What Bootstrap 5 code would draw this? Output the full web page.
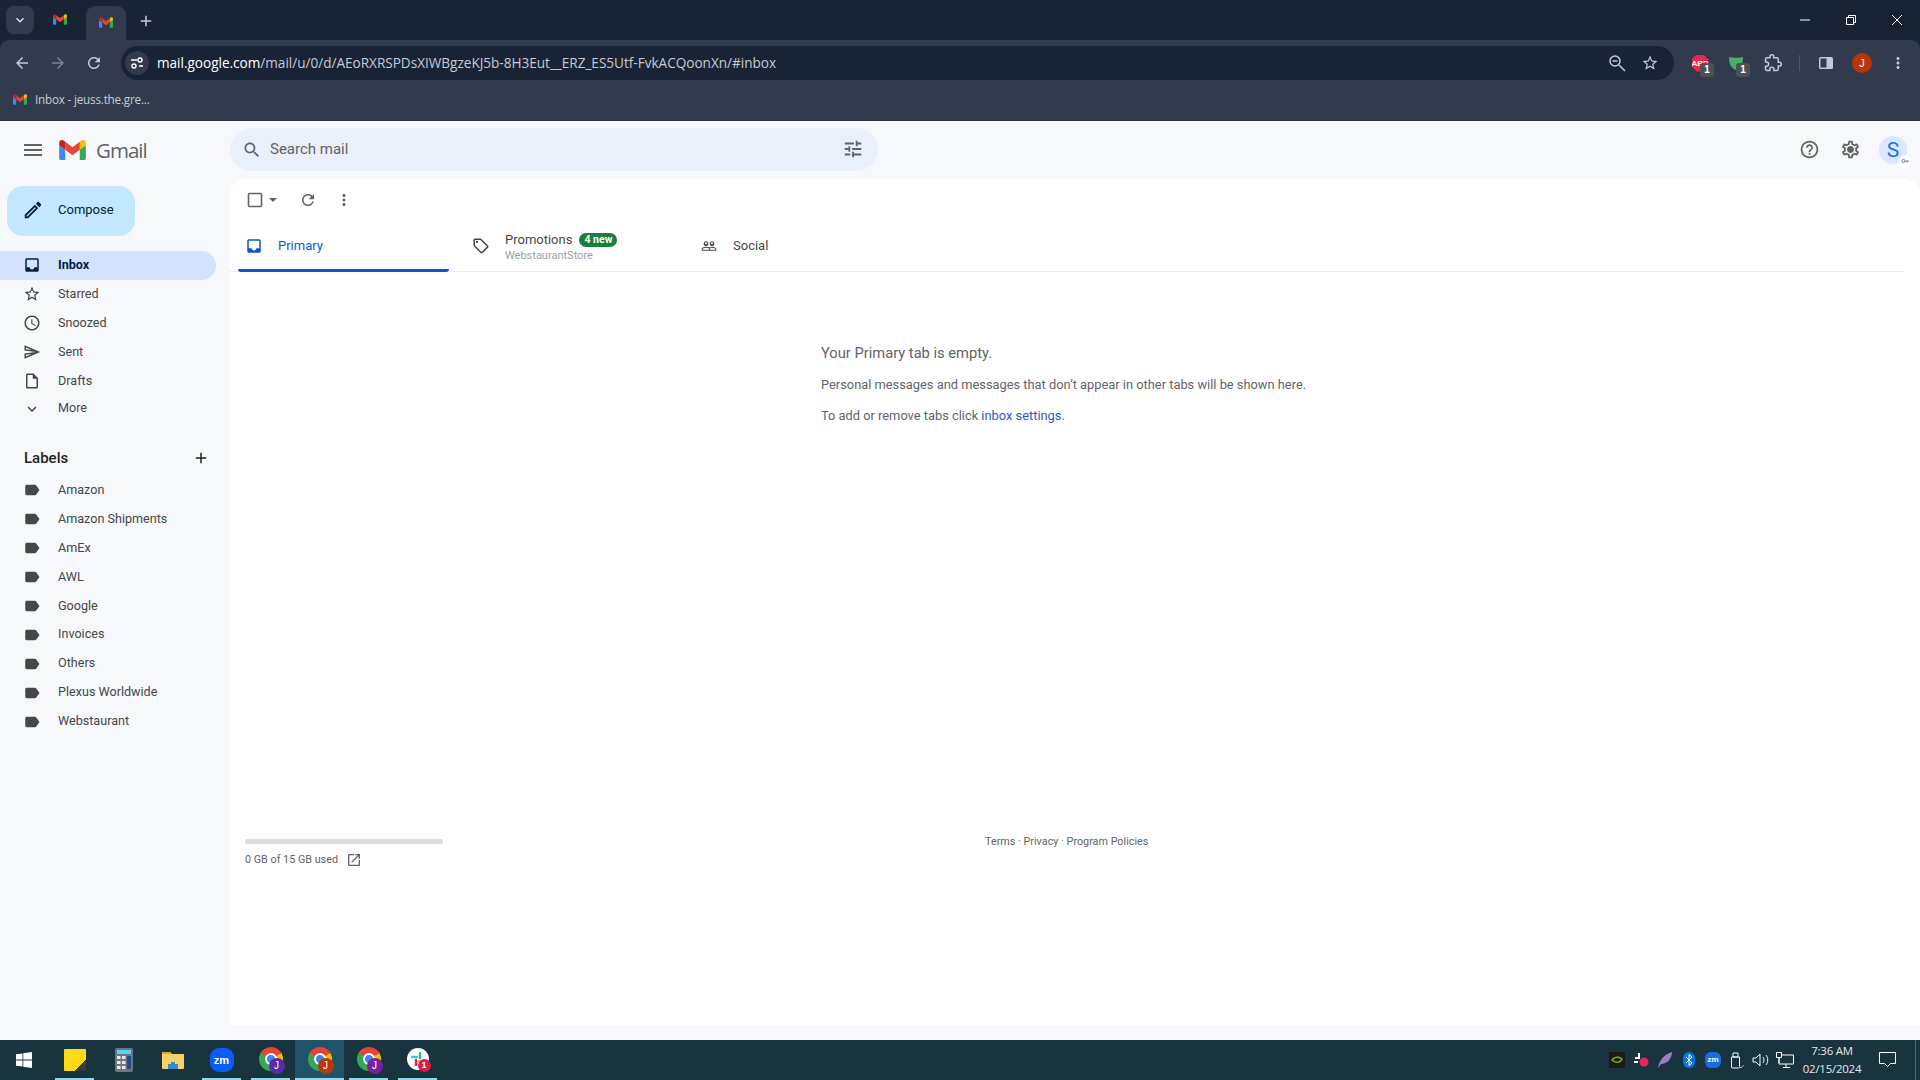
<!DOCTYPE html>
<html lang="en">
<head>
    <meta charset="utf-8" />
    <meta name="viewport" content="width=device-width, initial-scale=1">
    <title>Inbox - Gmail</title>
    <link href="https://cdn.jsdelivr.net/npm/bootstrap@5.3.0/dist/css/bootstrap.min.css" rel="stylesheet">
    <style>
        html, body { height: 1080px; overflow: hidden; }
        body { font-family: Roboto, "Liberation Sans", sans-serif; font-size: 12.6px; color: #444746; background: #f6f8fc; }
        svg { display: block; flex: none; fill: currentColor; }

        /* browser frame */
        .browser-top { background: #192336; }
        .tab-strip { height: 40px; color: #fff; }
        .tab-list-btn { width: 28px; height: 28px; margin: 6px 0 0 6px; background: #323b4d; border-radius: 8px; color: #e3e6ea; }
        .tab-idle { width: 52px; padding-bottom: 1px; }
        .tab-active { width: 40px; height: 34px; margin-top: 6px; padding-bottom: 2px; background: #323b4d; border-radius: 9px 9px 0 0; }
        .tab-new { width: 40px; color: #c8ccd4; padding-top: 1px; }
        .win-btn { width: 46px; color: #fff; }
        .tool-bar { height: 40px; background: #323b4d; border-radius: 9px 9px 0 0; padding: 6px 0 0 4px; color: #c7cbd3; }
        .tool-btn { width: 36px; height: 34px; }
        .url-box { width: 1553px; height: 34px; margin: 0 8px 0 9px; background: #192336; border-radius: 17px; color: #fff; }
        .url-site { width: 24px; height: 24px; margin: 0 8px 0 4px; background: #323b4d; border-radius: 50%; }
        .url-text { font-family: "Open Sans", "Liberation Sans", sans-serif; font-size: 13.6px; letter-spacing: -.02px; color: #c7cbd3; }
        .url-text b { font-weight: 400; color: #fff; }
        .url-actions { gap: 15px; margin-right: 15px; }
        .ext-icon { position: relative; width: 36px; height: 34px; }
        .ext-count { position: absolute; right: 4px; bottom: 3px; width: 14px; height: 14px; background: #505050; border-radius: 3px; font: 700 10px/14px "Liberation Sans", sans-serif; color: #fff; text-align: center; }
        .ext-abp { width: 17px; height: 17px; background: #e8264f; clip-path: polygon(30% 0, 70% 0, 100% 30%, 100% 70%, 70% 100%, 30% 100%, 0 70%, 0 30%); font: 700 8px/17px "Liberation Sans", sans-serif; color: #fff; text-align: center; }
        .ext-puzzle { width: 38px; }
        .tool-sep-wrap { height: 34px; }
        .tool-sep { width: 1px; height: 16px; margin: 0 8px 0 7px; background: #4e5768; }
        .chrome-avatar { width: 20px; height: 20px; background: #bb3606; border-radius: 50%; font: 11px/20px "Liberation Sans", sans-serif; color: #fff; text-align: center; }
        .bookmark-bar { height: 41px; background: #323b4d; border-bottom: 1px solid #2a2f38; padding: 0 0 1px 13px; font-family: "Open Sans", "Liberation Sans", sans-serif; font-size: 11.7px; letter-spacing: -.2px; color: #c7cbd3; }

        /* gmail header */
        .gm-head { height: 58px; }
        .gm-brand { width: 230px; padding-left: 21px; color: #5f6368; }
        .gm-logo { margin-left: 14px; }
        .gm-word { font-family: "Open Sans", sans-serif; font-size: 20.5px; letter-spacing: -1px; color: #5f6368; margin-left: 10px; }
        .gm-search { width: 648px; height: 43px; margin-top: -1px; background: #e9f0fa; border-radius: 22px; padding: 0 12px; font-size: 15px; color: #5f6368; }
        .gm-tune { margin: -1px 2px 0 0; }
        .head-btn { width: 40px; margin-top: -1px; color: #5f6368; }
        .help-btn { margin-left: -1px; margin-right: 1px; }
        .gm-avatar { position: relative; width: 28px; height: 28px; margin: 0 13px 0 9px; background: #dbe8fb; border-radius: 50%; font-size: 21px; line-height: 28px; color: #1a73e8; text-align: center; }
        .gm-key { position: absolute; right: -4px; bottom: -3px; width: 12px; height: 12px; background: #fff; border-radius: 50%; color: #5f6368; padding: 2px; }

        /* sidebar */
        .gm-side { width: 230px; padding-top: 7px; }
        .gm-compose { width: 128px; height: 50px; margin: 0 0 15px 7px; background: #c2e7ff; border-radius: 16px; padding: 0 0 2px 15px; font-size: 13px; color: #001d35; border: 0; gap: 14px; }
        .side-row { height: 29px; width: 216px; padding: 0 0 1px 23px; color: #444746; border-radius: 0 15px 15px 0; }
        .side-row svg { margin-right: 17px; }
        .side-row.current { background: #d3e3fd; color: #041e49; font-weight: 700; }
        .side-row.more-row { height: 25px; padding-bottom: 0; }
        .label-title { height: 30px; margin-top: 22px; padding: 0 20px 0 24px; font-size: 15px; font-weight: 500; color: #1f1f1f; }
        .label-list { margin-top: 3px; }
        .label-list .side-row { height: 28.9px; padding-bottom: 0; }

        /* main panel */
        .gm-panel { background: #fff; border-radius: 16px 16px 0 0; margin-bottom: 15px; padding-right: 15px; }
        .mail-tools { height: 42px; padding: 0 0 0 16px; color: #5f6368; }
        .mail-refresh { margin-left: 21px; }
        .mail-more { margin-left: 18px; }
        .mail-tabs { height: 48px; margin: 3px 0 0; border-bottom: 1px solid #eceef1; font-size: 13px; }
        .mail-tab { width: 211px; height: 48px; border-bottom: 3px solid transparent; border-radius: 0 0 3px 3px; padding: 0 0 1px 23px; color: #444746; gap: 15px; }
        .mail-tab.on { margin-left: 8px; padding-left: 7px; border-bottom-color: #0b57d0; color: #0b57d0; }
        .mail-tab.social-tab { padding-left: 41px; gap: 16px; }
        .tab-promo { margin-top: 1px; }
        .tab-sub { font-size: 11px; color: #9aa0a6; line-height: 14px; margin-top: 0; }
        .new-pill { height: 14px; margin-left: 7px; padding: 0 5px; background: #188038; border-radius: 7px; font-size: 10.5px; font-weight: 700; line-height: 14px; color: #fff; }
        .empty-box { padding: 71px 0 0 591px; line-height: 20px; color: #5f6368; font-size: 12.85px; }
        .empty-title { font-size: 14.7px; margin-bottom: 12px; }
        .empty-box p { margin: 0 0 11px; }
        .empty-box a { color: #2f55c8; text-decoration: none; }
        .mail-foot { padding: 0 0 157px 15px; font-size: 10.8px; color: #5f6368; }
        .quota { width: 198px; }
        .quota-bar { height: 5px; background: #dadce0; border-radius: 3px; margin-bottom: 8px; }
        .foot-links { margin-left: 542px; line-height: 5px; }

        /* windows taskbar */
        .task-bar { height: 40px; background: #17343f; color: #fff; }
        .task-tile { position: relative; width: 49px; height: 40px; }
        .task-tile.start-tile { width: 50px; padding-right: 2px; }
        .task-tile.running::after { content: ""; position: absolute; left: 5px; right: 5px; bottom: 0; height: 2px; background: #8fd8ee; }
        .task-tile.focus { background: #1f5468; }
        .task-tile.focus::after { left: 0; right: 0; }
        .tile-sticky { width: 22px; height: 22px; background: linear-gradient(135deg, #ffd91a 75%, #3a3a3a 75%); border-radius: 1px; }
        .tile-calc { width: 18px; height: 24px; background: #6d7680; border-radius: 2px; padding: 2px; }
        .tile-zoom { width: 24px; height: 24px; background: #0b5cff; border-radius: 9px; font: 700 11px/24px "Liberation Sans", sans-serif; color: #fff; text-align: center; }
        .tile-chrome { position: relative; width: 24px; height: 24px; margin-top: -2px; border-radius: 50%; background: conic-gradient(from 60deg, #fbbc04 0 120deg, #34a853 120deg 240deg, #ea4335 240deg 360deg); }
        .tile-chrome::before { content: ""; position: absolute; inset: 6px; background: #4285f4; border: 2px solid #fff; border-radius: 50%; }
        .tile-user { position: absolute; right: -2px; bottom: -3px; width: 16px; height: 16px; border-radius: 50%; font: 10px/16px "Liberation Sans", sans-serif; color: #fff; text-align: center; }
        .user-violet { background: #5b2aa8; }
        .user-rust { background: #bb3606; }
        .user-purple { background: #7b1fa2; }
        .tile-slack { position: relative; width: 22px; height: 22px; margin-top: -2px; background: #fff; border-radius: 50%; }
        .tile-badge { position: absolute; right: -2px; bottom: -2px; width: 13px; height: 13px; background: #d81b4a; border-radius: 50%; font: 700 9px/13px "Liberation Sans", sans-serif; text-align: center; color: #fff; }
        .tray-item { width: 24px; }
        .tray-nvidia { width: 16px; height: 16px; background: #1a1a1a; color: #76b900; }
        .tray-blue { width: 12px; height: 16px; background: #0a74e0; border-radius: 6px; }
        .tray-zoom { width: 16px; height: 16px; background: #1a6de0; border-radius: 6px; font: 700 8px/16px "Liberation Sans", sans-serif; text-align: center; color: #fff; }
        .tray-clock { width: 70px; font-family: "Open Sans", "Liberation Sans", sans-serif; font-size: 11.4px; line-height: 18px; letter-spacing: -.2px; text-align: center; color: #e6eaec; }
        .tray-note { width: 40px; }
        .tray-line { width: 1px; height: 40px; margin: 0 4px 0 8px; background: #54666e; }
    </style>
</head>
<body class="d-flex flex-column m-0">
    <svg width="0" height="0" class="position-absolute">
        <symbol id="i-gmail" viewBox="52 42 88 66">
            <path fill="#4285f4" d="M58 108h14V74L52 59v43c0 3.32 2.69 6 6 6"/>
            <path fill="#34a853" d="M120 108h14c3.32 0 6-2.69 6-6V59l-20 15"/>
            <path fill="#fbbc04" d="M120 48v26l20-15v-8c0-7.42-8.47-11.65-14.4-7.2"/>
            <path fill="#ea4335" d="M72 74V48l24 18 24-18v26L96 92"/>
            <path fill="#c5221f" d="M52 51v8l20 15V48l-5.6-4.2c-5.94-4.45-14.4-.22-14.4 7.2"/>
        </symbol>
        <symbol id="i-menu" viewBox="0 0 24 24"><path d="M3 18h18v-2H3v2zm0-5h18v-2H3v2zm0-7v2h18V6H3z"/></symbol>
        <symbol id="i-search" viewBox="0 0 24 24"><path d="M15.5 14h-.79l-.28-.27C15.41 12.59 16 11.11 16 9.5 16 5.91 13.09 3 9.5 3S3 5.91 3 9.5 5.91 16 9.5 16c1.61 0 3.09-.59 4.23-1.57l.27.28v.79l5 4.99L20.49 19l-4.99-5zm-6 0C7.01 14 5 11.99 5 9.5S7.01 5 9.5 5 14 7.01 14 9.5 11.99 14 9.5 14z"/></symbol>
        <symbol id="i-tune" viewBox="0 0 24 24"><path d="M3 17v2h6v-2H3zM3 5v2h10V5H3zm10 16v-2h8v-2h-8v-2h-2v6h2zM7 9v2H3v2h4v2h2V9H7zm14 4v-2H11v2h10zm-6-4h2V7h4V5h-4V3h-2v6z"/></symbol>
        <symbol id="i-help" viewBox="0 0 24 24"><path d="M11 18h2v-2h-2v2zm1-16C6.48 2 2 6.48 2 12s4.48 10 10 10 10-4.48 10-10S17.52 2 12 2zm0 18c-4.41 0-8-3.59-8-8s3.59-8 8-8 8 3.59 8 8-3.59 8-8 8zm0-14c-2.21 0-4 1.79-4 4h2c0-1.1.9-2 2-2s2 .9 2 2c0 2-3 1.75-3 5h2c0-2.25 3-2.5 3-5 0-2.21-1.79-4-4-4z"/></symbol>
        <symbol id="i-gear" viewBox="0 0 24 24"><path d="M19.43 12.98c.04-.32.07-.64.07-.98 0-.34-.03-.66-.07-.98l2.11-1.65c.19-.15.24-.42.12-.64l-2-3.46c-.09-.16-.26-.25-.44-.25-.06 0-.12.01-.17.03l-2.49 1c-.52-.4-1.08-.73-1.69-.98l-.38-2.65C14.46 2.18 14.25 2 14 2h-4c-.25 0-.46.18-.49.42l-.38 2.65c-.61.25-1.17.59-1.69.98l-2.49-1c-.06-.02-.12-.03-.18-.03-.17 0-.34.09-.43.25l-2 3.46c-.13.22-.07.49.12.64l2.11 1.65c-.04.32-.07.65-.07.98 0 .33.03.66.07.98l-2.11 1.65c-.19.15-.24.42-.12.64l2 3.46c.09.16.26.25.44.25.06 0 .12-.01.17-.03l2.49-1c.52.4 1.08.73 1.69.98l.38 2.65c.03.24.24.42.49.42h4c.25 0 .46-.18.49-.42l.38-2.65c.61-.25 1.17-.59 1.69-.98l2.49 1c.06.02.12.03.18.03.17 0 .34-.09.43-.25l2-3.46c.12-.22.07-.49-.12-.64l-2.11-1.65zm-1.98-1.71c.04.31.05.52.05.73 0 .21-.02.43-.05.73l-.14 1.13.89.7 1.08.84-.7 1.21-1.27-.51-1.04-.42-.9.68c-.43.32-.84.56-1.25.73l-1.06.43-.16 1.13-.2 1.35h-1.4l-.19-1.35-.16-1.13-1.06-.43c-.43-.18-.83-.41-1.23-.71l-.91-.7-1.06.43-1.27.51-.7-1.21 1.08-.84.89-.7-.14-1.13c-.03-.31-.05-.54-.05-.74s.02-.43.05-.73l.14-1.13-.89-.7-1.08-.84.7-1.21 1.27.51 1.04.42.9-.68c.43-.32.84-.56 1.25-.73l1.06-.43.16-1.13.2-1.35h1.39l.19 1.35.16 1.13 1.06.43c.43.18.83.41 1.23.71l.91.7 1.06-.43 1.27-.51.7 1.21-1.07.85-.89.7.14 1.13zM12 8c-2.21 0-4 1.79-4 4s1.79 4 4 4 4-1.79 4-4-1.79-4-4-4z"/></symbol>
        <symbol id="i-edit" viewBox="0 0 24 24"><path d="M14.06 9.02l.92.92L5.92 19H5v-.92l9.06-9.06M17.66 3c-.25 0-.51.1-.7.29l-1.83 1.83 3.75 3.75 1.83-1.83c.39-.39.39-1.02 0-1.41l-2.34-2.34c-.2-.2-.45-.29-.71-.29zm-3.6 3.19L3 17.25V21h3.75L17.81 9.94l-3.75-3.75z"/></symbol>
        <symbol id="i-inbox" viewBox="0 0 24 24"><path d="M19 3H5c-1.1 0-2 .9-2 2v14c0 1.1.9 2 2 2h14c1.1 0 2-.9 2-2V5c0-1.1-.9-2-2-2zm0 12h-4c0 1.66-1.35 3-3 3s-3-1.34-3-3H5V5h14v10z"/></symbol>
        <symbol id="i-star" viewBox="0 0 24 24"><path d="M22 9.24l-7.19-.62L12 2 9.19 8.63 2 9.24l5.46 4.73L5.82 21 12 17.27 18.18 21l-1.63-7.03L22 9.24zM12 15.4l-3.76 2.27 1-4.28-3.32-2.88 4.38-.38L12 6.1l1.71 4.04 4.38.38-3.32 2.88 1 4.28L12 15.4z"/></symbol>
        <symbol id="i-clock" viewBox="0 0 24 24"><path d="M11.99 2C6.47 2 2 6.48 2 12s4.47 10 9.99 10C17.52 22 22 17.52 22 12S17.52 2 11.99 2zM12 20c-4.42 0-8-3.58-8-8s3.58-8 8-8 8 3.58 8 8-3.58 8-8 8zm.5-13H11v6l5.25 3.15.75-1.23-4.5-2.67z"/></symbol>
        <symbol id="i-send" viewBox="0 0 24 24"><path d="M4.01 6.03l7.51 3.22-7.52-1 .01-2.22m7.5 8.72L4 17.97v-2.22l7.51-1M2.01 3L2 10l15 2-15 2 .01 7L23 12 2.01 3z"/></symbol>
        <symbol id="i-draft" viewBox="0 0 24 24"><path d="M14 2H6c-1.1 0-2 .9-2 2v16c0 1.1.9 2 2 2h12c1.1 0 2-.9 2-2V8l-6-6zM6 20V4h7v5h5v11H6z"/></symbol>
        <symbol id="i-down" viewBox="0 0 24 24"><path d="M16.59 8.59L12 13.17 7.41 8.59 6 10l6 6 6-6z"/></symbol>
        <symbol id="i-add" viewBox="0 0 24 24"><path d="M19 13h-6v6h-2v-6H5v-2h6V5h2v6h6v2z"/></symbol>
        <symbol id="i-label" viewBox="0 0 24 24"><path d="M17.63 5.84C17.27 5.33 16.67 5 16 5L5 5.01C3.9 5.01 3 5.9 3 7v10c0 1.1.9 1.99 2 1.99L16 19c.67 0 1.27-.33 1.63-.84L22 12l-4.37-6.16z"/></symbol>
        <symbol id="i-refresh" viewBox="0 0 24 24"><path d="M17.65 6.35C16.2 4.9 14.21 4 12 4c-4.42 0-7.99 3.58-7.99 8s3.57 8 7.99 8c3.73 0 6.84-2.55 7.73-6h-2.08c-.82 2.33-3.04 4-5.65 4-3.31 0-6-2.69-6-6s2.69-6 6-6c1.66 0 3.14.69 4.22 1.78L13 11h7V4l-2.35 2.35z"/></symbol>
        <symbol id="i-dots" viewBox="0 0 24 24"><path d="M12 8c1.1 0 2-.9 2-2s-.9-2-2-2-2 .9-2 2 .9 2 2 2zm0 2c-1.1 0-2 .9-2 2s.9 2 2 2 2-.9 2-2-.9-2-2-2zm0 6c-1.1 0-2 .9-2 2s.9 2 2 2 2-.9 2-2-.9-2-2-2z"/></symbol>
        <symbol id="i-tag" viewBox="0 0 24 24"><path d="M21.41 11.41l-8.83-8.83C12.21 2.21 11.7 2 11.17 2H4c-1.1 0-2 .9-2 2v7.17c0 .53.21 1.04.59 1.41l8.83 8.83c.78.78 2.05.78 2.83 0l7.17-7.17c.78-.78.78-2.05-.01-2.83zM12.83 20L4 11.17V4h7.17L20 12.83 12.83 20z"/><circle cx="6.5" cy="6.5" r="1.5"/></symbol>
        <symbol id="i-people" viewBox="0 0 24 24"><path d="M16.5 13c-1.2 0-3.07.34-4.5 1-1.43-.67-3.3-1-4.5-1C5.33 13 1 14.08 1 16.25V19h22v-2.75c0-2.17-4.33-3.25-6.5-3.25zm-4 4.5h-10v-1.25c0-.54 2.56-1.75 5-1.75s5 1.21 5 1.75v1.25zm9 0H14v-1.25c0-.46-.2-.86-.52-1.22.88-.3 1.96-.53 3.02-.53 2.44 0 5 1.21 5 1.75v1.25zM7.5 12c1.93 0 3.5-1.57 3.5-3.5S9.43 5 7.5 5 4 6.57 4 8.5 5.57 12 7.5 12zm0-5.5c.83 0 1.5.67 1.5 1.5s-.67 1.5-1.5 1.5S6 8.83 6 8s.67-1.5 1.5-1.5zm9 5.5c1.93 0 3.5-1.57 3.5-3.5S18.43 5 16.5 5 13 6.57 13 8.5s1.57 3.5 3.5 3.5zm0-5.5c.83 0 1.5.67 1.5 1.5s-.67 1.5-1.5 1.5S15 8.83 15 8s.67-1.5 1.5-1.5z"/></symbol>
        <symbol id="i-open" viewBox="0 0 24 24"><path d="M19 19H5V5h7V3H5a2 2 0 0 0-2 2v14a2 2 0 0 0 2 2h14c1.1 0 2-.9 2-2v-7h-2v7zM14 3v2h3.59l-9.83 9.83 1.41 1.41L19 6.41V10h2V3h-7z"/></symbol>
        <symbol id="i-back" viewBox="0 0 24 24"><path d="M20 11H7.83l5.59-5.59L12 4l-8 8 8 8 1.41-1.41L7.83 13H20v-2z"/></symbol>
        <symbol id="i-forward" viewBox="0 0 24 24"><path d="M12 4l-1.41 1.41L16.17 11H4v2h12.17l-5.58 5.59L12 20l8-8z"/></symbol>
    </svg>

    <!-- browser frame -->
    <div class="browser-top">
        <div class="tab-strip d-flex">
            <div class="tab-list-btn d-flex align-items-center justify-content-center">
                <svg width="16" height="16"><use href="#i-down"/></svg>
            </div>
            <div class="tab-idle d-flex align-items-center justify-content-center"><svg width="14" height="11"><use href="#i-gmail"/></svg></div>
            <div class="tab-active d-flex align-items-center justify-content-center"><svg width="14" height="11"><use href="#i-gmail"/></svg></div>
            <div class="tab-new d-flex align-items-center justify-content-center"><svg width="18" height="18"><use href="#i-add"/></svg></div>
            <div class="ms-auto d-flex">
                <div class="win-btn d-flex align-items-center justify-content-center">
                    <svg width="10" height="10" viewBox="0 0 10 10"><path d="M0 5h10" stroke="#fff" fill="none"/></svg>
                </div>
                <div class="win-btn d-flex align-items-center justify-content-center">
                    <svg width="10" height="10" viewBox="0 0 10 10"><path d="M.5 2.5h7v7h-7zM2.5 2.5v-2h7v7h-2" stroke="#fff" fill="none"/></svg>
                </div>
                <div class="win-btn d-flex align-items-center justify-content-center">
                    <svg width="10" height="10" viewBox="0 0 10 10"><path d="M0 0l10 10M10 0L0 10" stroke="#fff" fill="none"/></svg>
                </div>
            </div>
        </div>
        <div class="tool-bar d-flex align-items-start">
            <div class="tool-btn d-flex align-items-center justify-content-center"><svg width="18" height="18"><use href="#i-back"/></svg></div>
            <div class="tool-btn d-flex align-items-center justify-content-center opacity-50"><svg width="18" height="18"><use href="#i-forward"/></svg></div>
            <div class="tool-btn d-flex align-items-center justify-content-center"><svg width="18" height="18"><use href="#i-refresh"/></svg></div>
            <div class="url-box d-flex align-items-center">
                <div class="url-site d-flex align-items-center justify-content-center">
                    <svg width="14" height="14" viewBox="0 0 14 14"><path d="M1 4h6M9 10h4" stroke="#fff" stroke-width="1.4"/><circle cx="10" cy="4" r="2" fill="none" stroke="#fff" stroke-width="1.4"/><circle cx="4" cy="10" r="2" fill="none" stroke="#fff" stroke-width="1.4"/></svg>
                </div>
                <div class="url-text text-nowrap"><b>mail.google.com</b>/mail/u/0/d/AEoRXRSPDsXIWBgzeKJ5b-8H3Eut__ERZ_ES5Utf-FvkACQoonXn/#inbox</div>
                <div class="url-actions ms-auto d-flex align-items-center">
                    <svg width="18" height="18" viewBox="0 0 18 18"><circle cx="7" cy="7" r="5" fill="none" stroke="#c7cbd3" stroke-width="1.5"/><path d="M4.5 7h5M11 11l6 6" stroke="#c7cbd3" stroke-width="1.5"/></svg>
                    <svg width="18" height="18" viewBox="0 0 24 24"><path fill="#c7cbd3" d="M22 9.24l-7.19-.62L12 2 9.19 8.63 2 9.24l5.46 4.73L5.82 21 12 17.27 18.18 21l-1.63-7.03L22 9.24zM12 15.4l-3.76 2.27 1-4.28-3.32-2.88 4.38-.38L12 6.1l1.71 4.04 4.38.38-3.32 2.88 1 4.28L12 15.4z"/></svg>
                </div>
            </div>
            <div class="ext-icon d-flex align-items-center justify-content-center">
                <div class="ext-abp">ABP</div><span class="ext-count">1</span>
            </div>
            <div class="ext-icon d-flex align-items-center justify-content-center">
                <svg width="16" height="16" viewBox="0 0 16 16"><path d="M1 2c4 1 10 1 14 0 0 7-2 11-7 13C3 13 1 9 1 2z" fill="#4caf68"/></svg><span class="ext-count">1</span>
            </div>
            <div class="tool-btn ext-puzzle d-flex align-items-center justify-content-center">
                <svg width="18" height="18" viewBox="0 0 24 24"><path d="M20.5 11H19V7c0-1.1-.9-2-2-2h-4V3.5C13 2.12 11.88 1 10.5 1S8 2.12 8 3.5V5H4c-1.1 0-1.99.9-1.99 2v3.8H3.5c1.49 0 2.7 1.21 2.7 2.7s-1.21 2.7-2.7 2.7H2V20c0 1.1.9 2 2 2h3.8v-1.5c0-1.49 1.21-2.7 2.7-2.7 1.49 0 2.7 1.21 2.7 2.7V22H17c1.1 0 2-.9 2-2v-4h1.5c1.38 0 2.5-1.12 2.5-2.5S21.88 11 20.5 11z" fill="none" stroke="#c0c8e0" stroke-width="2"/></svg>
            </div>
            <div class="tool-sep-wrap d-flex align-items-center"><div class="tool-sep"></div></div>
            <div class="tool-btn d-flex align-items-center justify-content-center">
                <svg width="16" height="14" viewBox="0 0 16 14"><rect x="1" y="1" width="14" height="12" rx="1.5" fill="#c0c8e0"/><rect x="2.5" y="2.5" width="6" height="9" fill="#323b4d"/></svg>
            </div>
            <div class="tool-btn d-flex align-items-center justify-content-center"><div class="chrome-avatar">J</div></div>
            <div class="tool-btn d-flex align-items-center justify-content-center"><svg width="18" height="18"><use href="#i-dots"/></svg></div>
        </div>
    </div>
    <div class="bookmark-bar d-flex align-items-center gap-1">
        <svg width="14" height="11"><use href="#i-gmail"/></svg>
        <span class="ms-1">Inbox - jeuss.the.gre...</span>
    </div>

    <!-- gmail header -->
    <header class="gm-head d-flex align-items-center">
        <div class="gm-brand d-flex align-items-center">
            <svg width="24" height="24"><use href="#i-menu"/></svg>
            <svg width="27" height="20" class="gm-logo"><use href="#i-gmail"/></svg>
            <span class="gm-word">Gmail</span>
        </div>
        <div class="gm-search d-flex align-items-center">
            <svg width="20" height="20" class="me-2"><use href="#i-search"/></svg>
            <span>Search mail</span>
            <svg width="22" height="22" class="gm-tune ms-auto"><use href="#i-tune"/></svg>
        </div>
        <div class="ms-auto d-flex align-items-center">
            <div class="head-btn help-btn d-flex justify-content-center"><svg width="21" height="21"><use href="#i-help"/></svg></div>
            <div class="head-btn d-flex justify-content-center"><svg width="21" height="21"><use href="#i-gear"/></svg></div>
            <div class="gm-avatar">S<span class="gm-key"><svg width="8" height="8" viewBox="0 0 10 10"><circle cx="3" cy="5" r="2" fill="none" stroke="currentColor"/><path d="M5 5h5M8 5v2" stroke="currentColor"/></svg></span></div>
        </div>
    </header>

    <div class="d-flex flex-grow-1 overflow-hidden">
        <!-- sidebar -->
        <aside class="gm-side flex-shrink-0">
            <button class="gm-compose d-flex align-items-center" type="button">
                <svg width="22" height="22"><use href="#i-edit"/></svg>
                <span>Compose</span>
            </button>
            <div class="d-flex flex-column">
                <div class="side-row current d-flex align-items-center"><svg width="18" height="18"><use href="#i-inbox"/></svg>Inbox</div>
                <div class="side-row d-flex align-items-center"><svg width="18" height="18"><use href="#i-star"/></svg>Starred</div>
                <div class="side-row d-flex align-items-center"><svg width="18" height="18"><use href="#i-clock"/></svg>Snoozed</div>
                <div class="side-row d-flex align-items-center"><svg width="18" height="18"><use href="#i-send"/></svg>Sent</div>
                <div class="side-row d-flex align-items-center"><svg width="18" height="18"><use href="#i-draft"/></svg>Drafts</div>
                <div class="side-row more-row d-flex align-items-center"><svg width="18" height="18"><use href="#i-down"/></svg>More</div>
            </div>
            <div class="label-title d-flex align-items-center justify-content-between">
                <span>Labels</span>
                <svg width="18" height="18"><use href="#i-add"/></svg>
            </div>
            <div class="label-list d-flex flex-column">
                <div class="side-row d-flex align-items-center"><svg width="18" height="18"><use href="#i-label"/></svg>Amazon</div>
                <div class="side-row d-flex align-items-center"><svg width="18" height="18"><use href="#i-label"/></svg>Amazon Shipments</div>
                <div class="side-row d-flex align-items-center"><svg width="18" height="18"><use href="#i-label"/></svg>AmEx</div>
                <div class="side-row d-flex align-items-center"><svg width="18" height="18"><use href="#i-label"/></svg>AWL</div>
                <div class="side-row d-flex align-items-center"><svg width="18" height="18"><use href="#i-label"/></svg>Google</div>
                <div class="side-row d-flex align-items-center"><svg width="18" height="18"><use href="#i-label"/></svg>Invoices</div>
                <div class="side-row d-flex align-items-center"><svg width="18" height="18"><use href="#i-label"/></svg>Others</div>
                <div class="side-row d-flex align-items-center"><svg width="18" height="18"><use href="#i-label"/></svg>Plexus Worldwide</div>
                <div class="side-row d-flex align-items-center"><svg width="18" height="18"><use href="#i-label"/></svg>Webstaurant</div>
            </div>
        </aside>

        <!-- mail panel -->
        <main class="gm-panel flex-grow-1 d-flex flex-column">
            <div class="mail-tools d-flex align-items-center">
                <svg width="18" height="18" viewBox="0 0 18 18"><rect x="2.5" y="2.5" width="13" height="13" rx="1" fill="none" stroke="currentColor" stroke-width="1.6"/></svg>
                <svg width="10" height="10" viewBox="0 0 10 10" class="ms-1"><path d="M1 3h8L5 7z"/></svg>
                <svg width="18" height="18" class="mail-refresh"><use href="#i-refresh"/></svg>
                <svg width="18" height="18" class="mail-more"><use href="#i-dots"/></svg>
            </div>
            <div class="mail-tabs d-flex">
                <div class="mail-tab on d-flex align-items-center"><svg width="18" height="18"><use href="#i-inbox"/></svg>Primary</div>
                <div class="mail-tab d-flex align-items-center">
                    <svg width="18" height="18"><use href="#i-tag"/></svg>
                    <div class="tab-promo">
                        <div class="d-flex align-items-center">Promotions<span class="new-pill">4 new</span></div>
                        <div class="tab-sub">WebstaurantStore</div>
                    </div>
                </div>
                <div class="mail-tab social-tab d-flex align-items-center"><svg width="16" height="16"><use href="#i-people"/></svg>Social</div>
            </div>
            <div class="empty-box">
                <div class="empty-title">Your Primary tab is empty.</div>
                <p>Personal messages and messages that don’t appear in other tabs will be shown here.</p>
                <p>To add or remove tabs click <a href="#">inbox settings</a>.</p>
            </div>
            <div class="mail-foot mt-auto d-flex">
                <div class="quota">
                    <div class="quota-bar"></div>
                    <div class="d-flex align-items-center gap-2">0 GB of 15 GB used <svg width="16" height="16"><use href="#i-open"/></svg></div>
                </div>
                <div class="foot-links">Terms · Privacy · Program Policies</div>
            </div>
        </main>
    </div>

    <!-- windows taskbar -->
    <footer class="task-bar d-flex flex-shrink-0">
        <div class="task-tile start-tile d-flex align-items-center justify-content-center">
            <svg width="16" height="16" viewBox="0 0 16 16"><path d="M0 2.3l6.5-.9v6.2H0zM7.3 1.3L16 0v7.6H7.3zM0 8.4h6.5v6.2L0 13.7zM7.3 8.4H16V16l-8.7-1.3z" fill="#fff"/></svg>
        </div>
        <div class="task-tile running d-flex align-items-center justify-content-center"><div class="tile-sticky"></div></div>
        <div class="task-tile d-flex align-items-center justify-content-center">
            <div class="tile-calc"><svg width="14" height="20" viewBox="0 0 14 20"><rect width="14" height="4" fill="#5ed0f0"/><path d="M0 6h3.5v3H0zM5 6h3.5v3H5zM0 11h3.5v3H0zM5 11h3.5v3H5zM0 16h3.5v3H0zM5 16h3.5v3H5z" fill="#e6e8ea"/><rect x="10" y="6" width="4" height="13" fill="#1d4e89"/></svg></div>
        </div>
        <div class="task-tile d-flex align-items-center justify-content-center">
            <svg width="22" height="20" viewBox="0 0 22 20"><path d="M0 2h8l2 2h12v14a1 1 0 0 1-1 1H1a1 1 0 0 1-1-1z" fill="#f7d264"/><path d="M0 2h8l2 2H0z" fill="#e0a526"/><path d="M6 19v-5h3v-2h4v2h3v5z" fill="#2f8fd8"/></svg>
        </div>
        <div class="task-tile running d-flex align-items-center justify-content-center"><div class="tile-zoom">zm</div></div>
        <div class="task-tile running d-flex align-items-center justify-content-center"><div class="tile-chrome"><span class="tile-user user-violet">J</span></div></div>
        <div class="task-tile running focus d-flex align-items-center justify-content-center"><div class="tile-chrome"><span class="tile-user user-rust">J</span></div></div>
        <div class="task-tile running d-flex align-items-center justify-content-center"><div class="tile-chrome"><span class="tile-user user-purple">J</span></div></div>
        <div class="task-tile running d-flex align-items-center justify-content-center">
            <div class="tile-slack d-flex align-items-center justify-content-center">
                <svg width="14" height="14" viewBox="0 0 14 14"><path d="M1 5h5" stroke="#36c5f0" stroke-width="2.4" stroke-linecap="round"/><path d="M9 1v5" stroke="#2eb67d" stroke-width="2.4" stroke-linecap="round"/><path d="M8 9h5" stroke="#ecb22e" stroke-width="2.4" stroke-linecap="round"/><path d="M5 8v5" stroke="#e01e5a" stroke-width="2.4" stroke-linecap="round"/></svg>
                <span class="tile-badge">1</span>
            </div>
        </div>
        <div class="ms-auto d-flex align-items-center">
            <div class="tray-item d-flex justify-content-center"><div class="tray-nvidia d-flex align-items-center justify-content-center"><svg width="12" height="10" viewBox="0 0 12 10"><path d="M1 5c2-3 7-4 10-1-1 3-6 5-10 1z" fill="none" stroke="currentColor" stroke-width="1.5"/></svg></div></div>
            <div class="tray-item d-flex justify-content-center">
                <svg width="16" height="16" viewBox="0 0 16 16"><path d="M2 6h5M6 1v4M1 10h4" stroke="#fff" stroke-width="2"/><circle cx="11" cy="10" r="4.5" fill="#e8265e"/></svg>
            </div>
            <div class="tray-item d-flex justify-content-center">
                <svg width="16" height="16" viewBox="0 0 16 16"><path d="M1 16C2 8 8 2 15 0c0 7-5 12-11 12z" fill="#a678c8"/></svg>
            </div>
            <div class="tray-item d-flex justify-content-center">
                <div class="tray-blue d-flex align-items-center justify-content-center"><svg width="8" height="12" viewBox="0 0 8 12"><path d="M1 3l6 6-3 2.5v-11L7 3 1 9" fill="none" stroke="#fff"/></svg></div>
            </div>
            <div class="tray-item d-flex justify-content-center"><div class="tray-zoom">zm</div></div>
            <div class="tray-item d-flex justify-content-center">
                <svg width="14" height="17" viewBox="0 0 14 17"><path d="M3 1h5v4H3zM1.5 5h8v10a1 1 0 0 1-1 1h-6a1 1 0 0 1-1-1z" fill="none" stroke="#fff"/><path d="M9 14l2 2 3-3" fill="none" stroke="#aab"/></svg>
            </div>
            <div class="tray-item d-flex justify-content-center">
                <svg width="18" height="14" viewBox="0 0 18 14"><path d="M1 5h3l4-4v12l-4-4H1zM11 4c1.3 1.5 1.3 4.5 0 6M14 2c2.3 2.800 2.300 7.200 0 10" fill="none" stroke="#fff"/></svg>
            </div>
            <div class="tray-item d-flex justify-content-center">
                <svg width="18" height="16" viewBox="0 0 18 16"><path d="M.5.5h5v5h-5zM6 3h11.5v9H3V6M10 12v3M7 15.5h7M3 6v5" fill="none" stroke="#fff"/></svg>
            </div>
            <div class="tray-clock"><div>7:36 AM</div><div>02/15/2024</div></div>
            <div class="tray-note d-flex justify-content-center">
                <svg width="17" height="16" viewBox="0 0 17 16"><path d="M.5.5h16v11h-5l-3 3-3-3h-5z" fill="none" stroke="#fff"/></svg>
            </div>
            <div class="tray-line"></div>
        </div>
    </footer>
    <script src="https://cdn.jsdelivr.net/npm/bootstrap@5.3.0/dist/js/bootstrap.bundle.min.js"></script>
</body>
</html>
